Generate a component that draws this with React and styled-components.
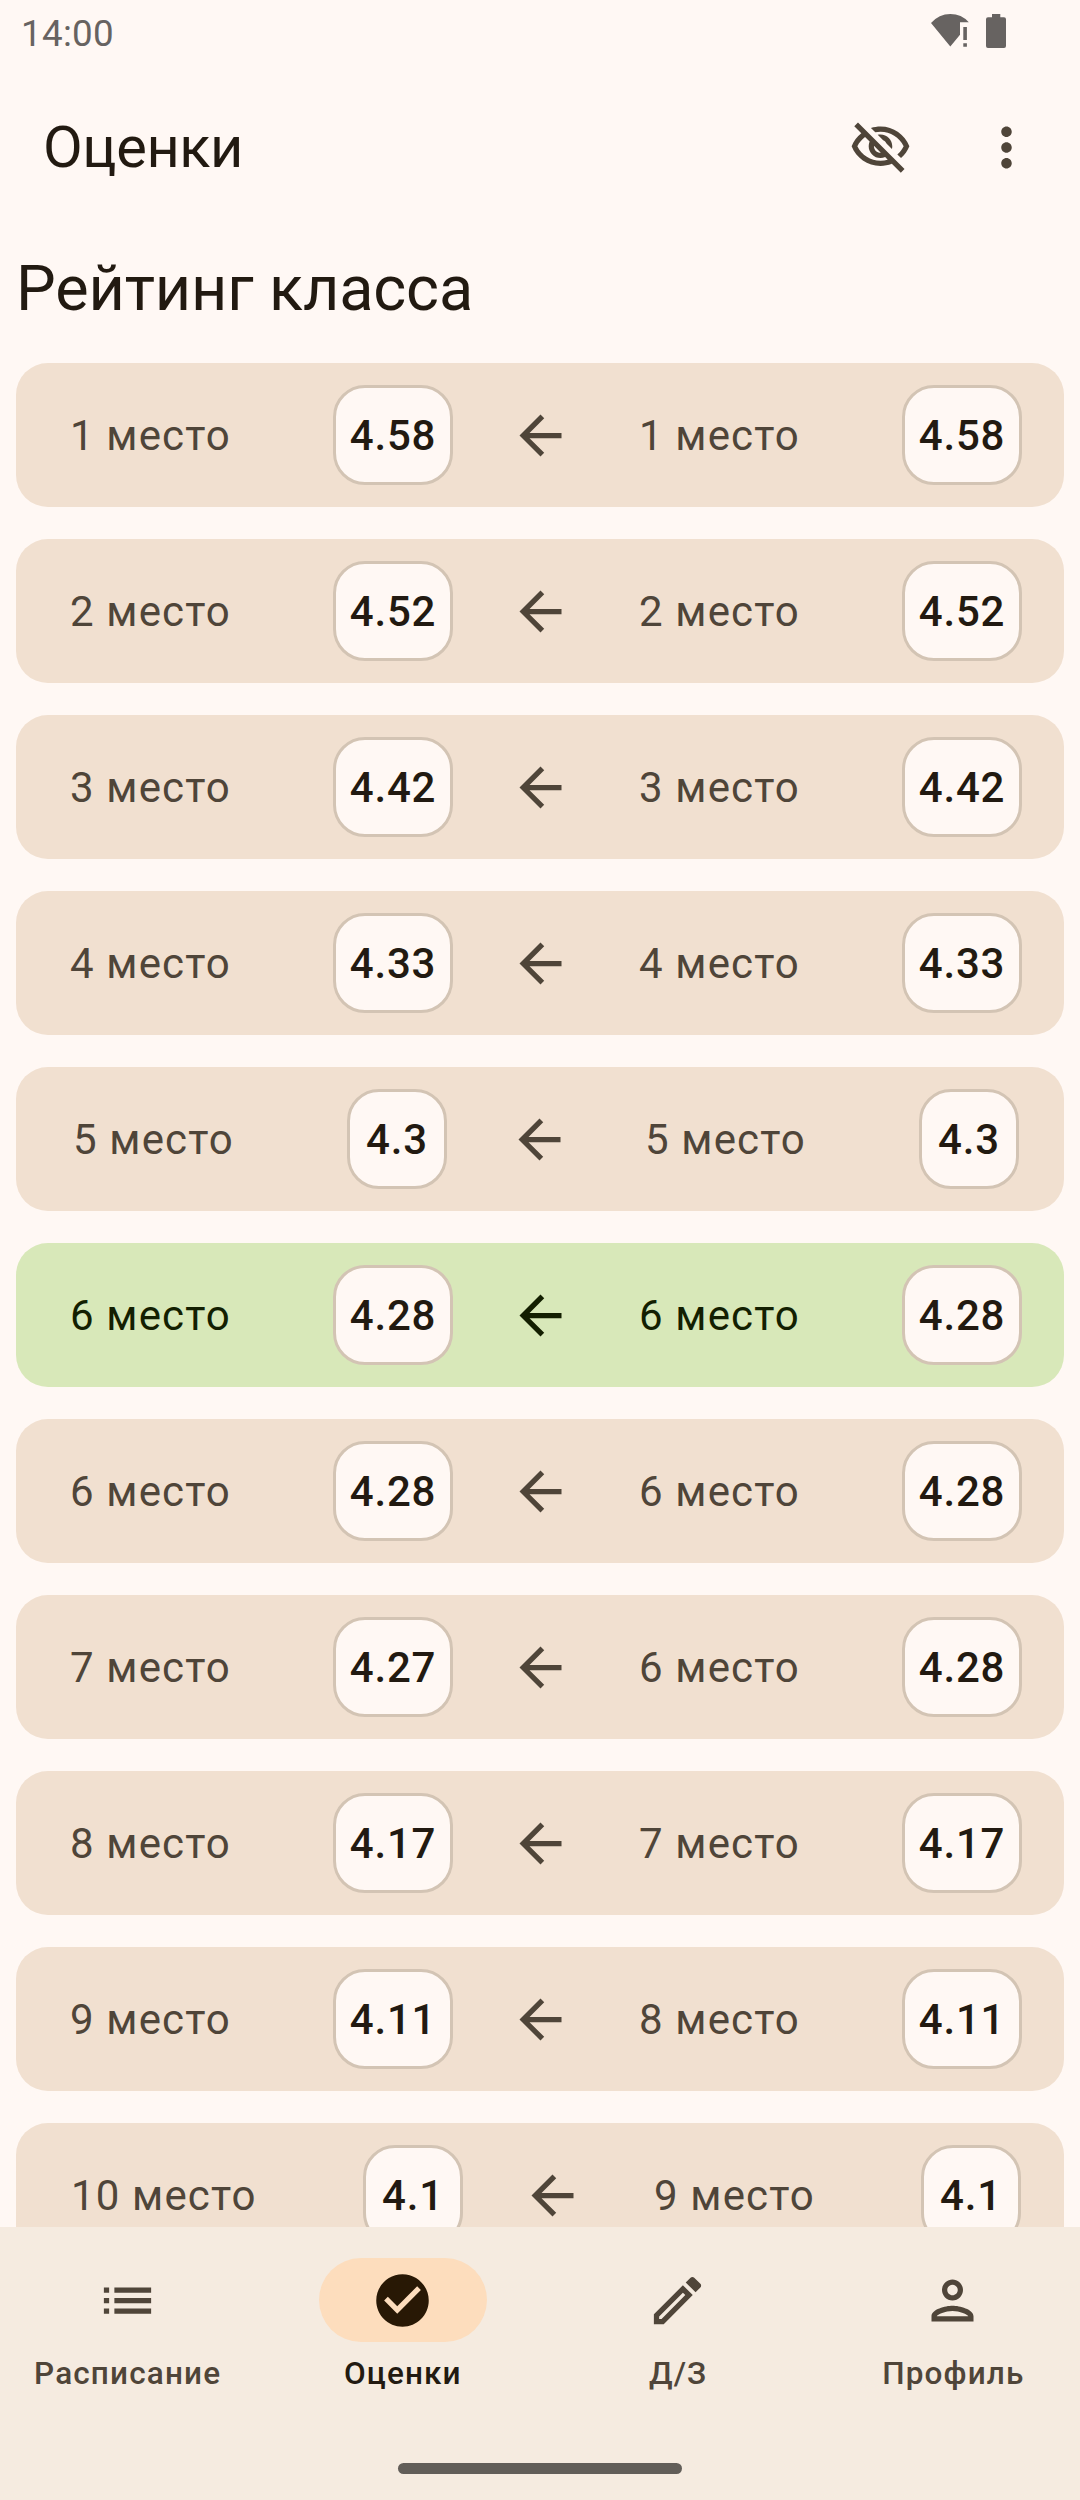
import React from "react";
import styled, { createGlobalStyle } from "styled-components";

const Global = createGlobalStyle`
  * { box-sizing: border-box; }
  body { margin: 0; background: #fff8f4; }
`;

const Screen = styled.div`
  width: 1080px;
  height: 2500px;
  display: flex;
  flex-direction: column;
  overflow: hidden;
  background: #fff8f4;
  color: #221a11;
  font-family: Roboto, "Noto Sans", sans-serif;
`;

const StatusBar = styled.header`
  flex: none;
  height: 63px;
  padding: 14px 74px 0 21px;
  display: flex;
  align-items: flex-start;
  justify-content: space-between;
  color: #676361;
`;

const Clock = styled.span`
  font-size: 36.75px;
  line-height: 40px;
  letter-spacing: 0.3px;
`;

const StatusIcons = styled.div`
  display: flex;
  align-items: flex-start;
  gap: 16px;
`;

const TopBar = styled.div`
  flex: none;
  height: 168px;
  padding: 0 42px 0 43px;
  display: flex;
  align-items: center;
  justify-content: space-between;
`;

const Title = styled.h1`
  margin: 0;
  font-size: 57.75px;
  font-weight: 400;
  line-height: 74px;
  letter-spacing: -0.4px;
`;

const Actions = styled.div`
  display: flex;
  align-items: center;
  gap: 63px;
  color: #4f4539;
`;

const Glyph = styled.svg`
  display: block;
  width: 63px;
  height: 63px;
  fill: currentColor;
`;

const Content = styled.main`
  flex: 1;
  min-height: 0;
  overflow: hidden;
  padding: 16px 16px 0;
`;

const Heading = styled.h2`
  margin: 0 0 32px;
  height: 84px;
  font-size: 63px;
  font-weight: 400;
  line-height: 84px;
  letter-spacing: -0.15px;
`;

const List = styled.div`
  display: flex;
  flex-direction: column;
  gap: 32px;
`;

const Row = styled.div`
  height: 144px;
  border-radius: 32px;
  display: grid;
  grid-template-columns: ${(p) => p.$columns};
  align-items: center;
  background: ${(p) => (p.$own ? "#d8e8b9" : "#f1e0d0")};
  color: ${(p) => (p.$own ? "#131f01" : "#4f4539")};
`;

const Place = styled.span`
  grid-column: ${(p) => p.$col};
  font-size: 42px;
  line-height: 63px;
  letter-spacing: 1.15px;
  white-space: nowrap;
`;

const Score = styled.span`
  grid-column: ${(p) => p.$col};
  height: 100px;
  border: 3px solid #d3c4b4;
  border-radius: 32px;
  background: #fff8f4;
  color: #221a11;
  display: flex;
  align-items: center;
  justify-content: center;
  font-size: 42px;
  font-weight: 500;
  letter-spacing: 0.8px;
`;

const ArrowCell = styled.span`
  grid-column: 5;
`;

const NavBar = styled.nav`
  flex: none;
  height: 273px;
  display: flex;
  flex-direction: column;
  align-items: center;
  justify-content: space-between;
  padding: 31px 0 26px;
  background: #f5ebe0;
`;

const Tabs = styled.div`
  width: 100%;
  display: grid;
  grid-template-columns: repeat(4, 1fr);
  gap: 21px;
`;

const Tab = styled.div`
  display: flex;
  flex-direction: column;
  align-items: center;
  gap: 11px;
  color: ${(p) => (p.$active ? "#221a11" : "#4f4539")};
`;

const Pill = styled.div`
  width: 168px;
  height: 84px;
  margin-left: ${(p) => (p.$active ? "1px" : "0")};
  border-radius: 42px;
  display: flex;
  align-items: center;
  justify-content: center;
  background: ${(p) => (p.$active ? "#fdddbd" : "transparent")};
  color: ${(p) => (p.$active ? "#281805" : "#4f4539")};
`;

const TabLabel = styled.span`
  padding-left: 1px;
  font-size: 31.5px;
  font-weight: 500;
  line-height: 42px;
  letter-spacing: 1.15px;
`;

const HomeHandle = styled.div`
  width: 284px;
  height: 11px;
  border-radius: 5.5px;
  background: #625e59;
`;

const ICONS = {
  hidden:
    "M12 6c3.79 0 7.17 2.13 8.82 5.5-.59 1.22-1.42 2.27-2.41 3.12l1.41 1.41c1.39-1.23 2.49-2.77 3.18-4.53C21.27 7.11 17 4 12 4c-1.27 0-2.49.2-3.64.57l1.65 1.65C10.66 6.09 11.32 6 12 6zm-1.07 1.14L13 9.21c.57.25 1.03.71 1.28 1.28l2.07 2.07c.08-.34.14-.7.14-1.07C16.5 9.01 14.48 7 12 7c-.37 0-.72.05-1.07.14zM2.01 3.87l2.68 2.68C3.06 7.83 1.77 9.53 1 11.5 2.73 15.89 7 19 12 19c1.52 0 2.98-.29 4.32-.82l3.42 3.42 1.41-1.41L3.42 2.45 2.01 3.87zm7.5 7.5l2.61 2.61c-.04.01-.08.02-.12.02-1.38 0-2.5-1.12-2.5-2.5 0-.05.01-.08.01-.13zm-3.4-3.4l1.75 1.75c-.23.55-.36 1.15-.36 1.78 0 2.48 2.02 4.5 4.5 4.5.63 0 1.23-.13 1.77-.36l.98.98c-.88.24-1.8.38-2.75.38-3.79 0-7.17-2.13-8.82-5.5.7-1.43 1.72-2.61 2.93-3.53z",
  more: "M12 8c1.1 0 2-.9 2-2s-.9-2-2-2-2 .9-2 2 .9 2 2 2zm0 2c-1.1 0-2 .9-2 2s.9 2 2 2 2-.9 2-2-.9-2-2-2zm0 6c-1.1 0-2 .9-2 2s.9 2 2 2 2-.9 2-2-.9-2-2-2z",
  back: "M20 11H7.83l5.59-5.59L12 4l-8 8 8 8 1.41-1.41L7.83 13H20v-2z",
  list: "M3 9h2V7H3v2zm0 4h2v-2H3v2zm0 4h2v-2H3v2zM7 7v2h14V7H7zm0 6h14v-2H7v2zm0 4h14v-2H7v2z",
  check:
    "M12 2C6.48 2 2 6.48 2 12s4.48 10 10 10 10-4.48 10-10S17.52 2 12 2zm-2 15l-5-5 1.41-1.41L10 14.17l7.59-7.59L19 8l-9 9z",
  edit: "M14.06 9.02l.92.92L5.92 19H5v-.92l9.06-9.06M17.66 3c-.25 0-.51.1-.7.29l-1.83 1.83 3.75 3.75 1.83-1.83c.39-.39.39-1.02 0-1.41l-2.34-2.34c-.2-.2-.45-.29-.71-.29zm-3.6 3.19L3 17.25V21h3.75L17.81 9.94l-3.75-3.75z",
  person:
    "M12 6c1.1 0 2 .9 2 2s-.9 2-2 2-2-.9-2-2 .9-2 2-2m0 10c2.7 0 5.8 1.29 6 2H6c.23-.72 3.31-2 6-2m0-12C9.79 4 8 5.79 8 8s1.79 4 4 4 4-1.79 4-4-1.79-4-4-4zm0 10c-2.67 0-8 1.34-8 4v2h16v-2c0-2.66-5.33-4-8-4z",
};

const Icon = ({ name }) => (
  <Glyph viewBox="0 0 24 24">
    <path d={ICONS[name]} />
  </Glyph>
);

const WIDE = "54px 263px 120px 56px 63px 67px 263px 120px 1fr";
const NARROW = "57px 274px 100px 61px 63px 74px 274px 100px 1fr";
const TEN = "55px 292px 100px 58px 63px 70px 267px 100px 1fr";

const ROWS = [
  [1, "4.58", 1, "4.58"],
  [2, "4.52", 2, "4.52"],
  [3, "4.42", 3, "4.42"],
  [4, "4.33", 4, "4.33"],
  [5, "4.3", 5, "4.3"],
  [6, "4.28", 6, "4.28", true],
  [6, "4.28", 6, "4.28"],
  [7, "4.27", 6, "4.28"],
  [8, "4.17", 7, "4.17"],
  [9, "4.11", 8, "4.11"],
  [10, "4.1", 9, "4.1"],
];

const columnsFor = (place, score) =>
  place >= 10 ? TEN : score.length < 4 ? NARROW : WIDE;

const TABS = [
  ["list", "Расписание"],
  ["check", "Оценки"],
  ["edit", "Д/З"],
  ["person", "Профиль"],
];

export default function App() {
  return (
    <Screen>
      <Global />
      <StatusBar>
        <Clock>14:00</Clock>
        <StatusIcons>
          <svg width="39" height="33" viewBox="0 0 39 33" fill="currentColor">
            <path d="M0 9Q8 0 19.3 0T37.800 8.300H29V20.700L19.300 32.500Z" />
            <path d="M32.300 13h3.600v13h-3.600zM32.300 29.300h3.600v3.500h-3.600z" />
          </svg>
          <svg width="20" height="34" viewBox="0 0 20 34" fill="currentColor">
            <path d="M6 0h8.300v3.300H18a2 2 0 0 1 2 2V32a2 2 0 0 1-2 2H2a2 2 0 0 1-2-2V5.300a2 2 0 0 1 2-2h4z" />
          </svg>
        </StatusIcons>
      </StatusBar>
      <TopBar>
        <Title>Оценки</Title>
        <Actions>
          <Icon name="hidden" />
          <Icon name="more" />
        </Actions>
      </TopBar>
      <Content>
        <Heading>Рейтинг класса</Heading>
        <List>
          {ROWS.map(([from, fromScore, to, toScore, own], i) => (
            <Row key={i} $own={own} $columns={columnsFor(from, fromScore)}>
              <Place $col={2}>{from} место</Place>
              <Score $col={3}>{fromScore}</Score>
              <ArrowCell>
                <Icon name="back" />
              </ArrowCell>
              <Place $col={7}>{to} место</Place>
              <Score $col={8}>{toScore}</Score>
            </Row>
          ))}
        </List>
      </Content>
      <NavBar>
        <Tabs>
          {TABS.map(([icon, label]) => (
            <Tab key={icon} $active={icon === "check"}>
              <Pill $active={icon === "check"}>
                <Icon name={icon} />
              </Pill>
              <TabLabel>{label}</TabLabel>
            </Tab>
          ))}
        </Tabs>
        <HomeHandle />
      </NavBar>
    </Screen>
  );
}
